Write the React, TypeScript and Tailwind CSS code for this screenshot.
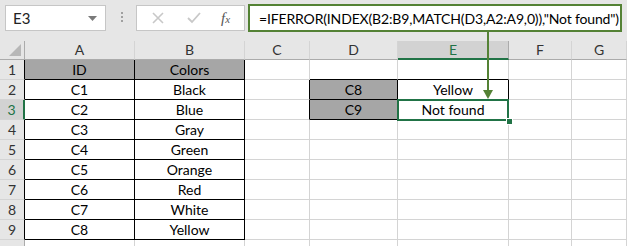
import React from "react";

const cols = ["A", "B", "C", "D", "E", "F", "G"];

const data: Record<string, string> = {
  A1: "ID",
  B1: "Colors",
  A2: "C1",
  B2: "Black",
  A3: "C2",
  B3: "Blue",
  A4: "C3",
  B4: "Gray",
  A5: "C4",
  B5: "Green",
  A6: "C5",
  B6: "Orange",
  A7: "C6",
  B7: "Red",
  A8: "C7",
  B8: "White",
  A9: "C8",
  B9: "Yellow",
  D2: "C8",
  E2: "Yellow",
  D3: "C9",
  E3: "Not found",
};

function inTable1(c: string, r: number) {
  return (c === "A" || c === "B") && r >= 1 && r <= 9;
}
function inTable2(c: string, r: number) {
  return (c === "D" || c === "E") && (r === 2 || r === 3);
}

function Cell({ c, r }: { c: string; r: number }) {
  const inside = inTable1(c, r) || inTable2(c, r);
  const right =
    inside || (c === "C" && (r === 2 || r === 3))
      ? "border-r-black"
      : "border-r-[#d4d4d4]";
  const bottom =
    inside || ((c === "D" || c === "E") && r === 1)
      ? "border-b-black"
      : "border-b-[#d4d4d4]";
  const gray = (inTable1(c, r) && r === 1) || (c === "D" && inTable2(c, r));
  return (
    <div
      className={`h-[20px] border-r border-b ${right} ${bottom} ${
        gray ? "bg-[#a6a6a6]" : "bg-white"
      } flex items-center justify-center text-[14px] text-black leading-none`}
    >
      {data[c + r] ?? ""}
    </div>
  );
}

export default function App() {
  const rows = [1, 2, 3, 4, 5, 6, 7, 8, 9, 10];
  return (
    <div
      className="relative w-[627px] h-[246px] overflow-hidden bg-[#e6e6e6] select-none"
      style={{ fontFamily: 'Lato, "Open Sans", sans-serif' }}
    >
      {/* formula toolbar */}
      <div className="h-[41px] flex items-start">
        <div className="mt-[5px] ml-[5px] w-[101px] h-[26px] bg-white border border-[#c6c6c6] flex items-center justify-between pl-[7px] pr-[8px]">
          <span className="text-[15px] text-[#222]">E3</span>
          <svg width="9" height="5" viewBox="0 0 9 5">
            <path d="M0 0h9L4.5 5z" fill="#7a7a7a" />
          </svg>
        </div>
        <div className="mt-[12px] ml-[15px] flex flex-col gap-[2px]">
          <div className="w-[2px] h-[2px] bg-[#a0a0a0]" />
          <div className="w-[2px] h-[2px] bg-[#a0a0a0]" />
          <div className="w-[2px] h-[2px] bg-[#a0a0a0]" />
        </div>
        <div className="mt-[5px] ml-[13px] w-[109px] h-[26px] bg-white border border-[#c6c6c6] flex items-center">
          <svg width="12" height="12" viewBox="0 0 12 12" className="ml-[15px]">
            <path d="M1 1l10 10M11 1L1 11" stroke="#c8c8c8" strokeWidth="1.6" />
          </svg>
          <svg width="14" height="12" viewBox="0 0 14 12" className="ml-[23px]">
            <path d="M1 6l4 4 8-9" stroke="#c8c8c8" strokeWidth="1.8" fill="none" />
          </svg>
          <span
            className="ml-[20px] text-[15px] italic text-[#555]"
            style={{ fontFamily: '"Liberation Serif", serif' }}
          >
            f<span className="text-[11px]">x</span>
          </span>
        </div>
        <div className="mt-[4px] ml-[3px] w-[374px] h-[28px] bg-white border-2 border-[#548235] flex items-center pl-[9px]">
          <span className="text-[14px] text-black whitespace-nowrap tracking-[-0.15px]">
            =IFERROR(INDEX(B2:B9,MATCH(D3,A2:A9,0)),"Not found")
          </span>
        </div>
      </div>

      {/* grid */}
      <div className="grid grid-cols-[25px_110px_110px_65px_88px_111px_63px_1fr]">
        <div className="h-[19px] border-r border-b border-[#ababab] relative">
          <svg width="12" height="12" viewBox="0 0 12 12" className="absolute right-[3px] bottom-[3px]">
            <path d="M12 0V12H0z" fill="#b7b7b7" />
          </svg>
        </div>
        {cols.map((c) => (
          <div
            key={c}
            className={`h-[19px] border-r flex items-center justify-center text-[14px] leading-none ${
              c === "E"
                ? "bg-[#d2d2d2] border-r-[#ababab] border-b-2 border-b-[#217346] text-[#217346]"
                : "border-r-[#d4d4d4] border-b border-b-[#ababab] text-[#333]"
            }`}
          >
            {c}
          </div>
        ))}
        {rows.map((r) => (
          <React.Fragment key={r}>
            <div
              className={`h-[20px] border-b border-b-[#d4d4d4] flex items-center justify-center text-[14px] leading-none ${
                r === 3
                  ? "bg-[#d2d2d2] border-r-2 border-r-[#217346] text-[#217346]"
                  : `border-r ${r <= 9 ? "border-r-black" : "border-r-[#ababab]"} text-[#333]`
              }`}
            >
              {r <= 9 ? r : ""}
            </div>
            {cols.map((c) => (
              <Cell key={c + r} c={c} r={r} />
            ))}
          </React.Fragment>
        ))}
      </div>

      {/* selection around E3 */}
      <div className="absolute left-[397px] top-[99px] w-[112px] h-[22px] border-2 border-[#217346] pointer-events-none" />
      <div className="absolute left-[506px] top-[118px] w-[5px] h-[5px] bg-[#217346] border border-white box-content" />

      {/* arrow from formula to E2 */}
      <svg className="absolute left-[482px] top-[32px]" width="12" height="68" viewBox="0 0 12 68">
        <path d="M6 0V62" stroke="#548235" strokeWidth="2" />
        <path d="M1 58h10L6 67z" fill="#548235" />
      </svg>
    </div>
  );
}
